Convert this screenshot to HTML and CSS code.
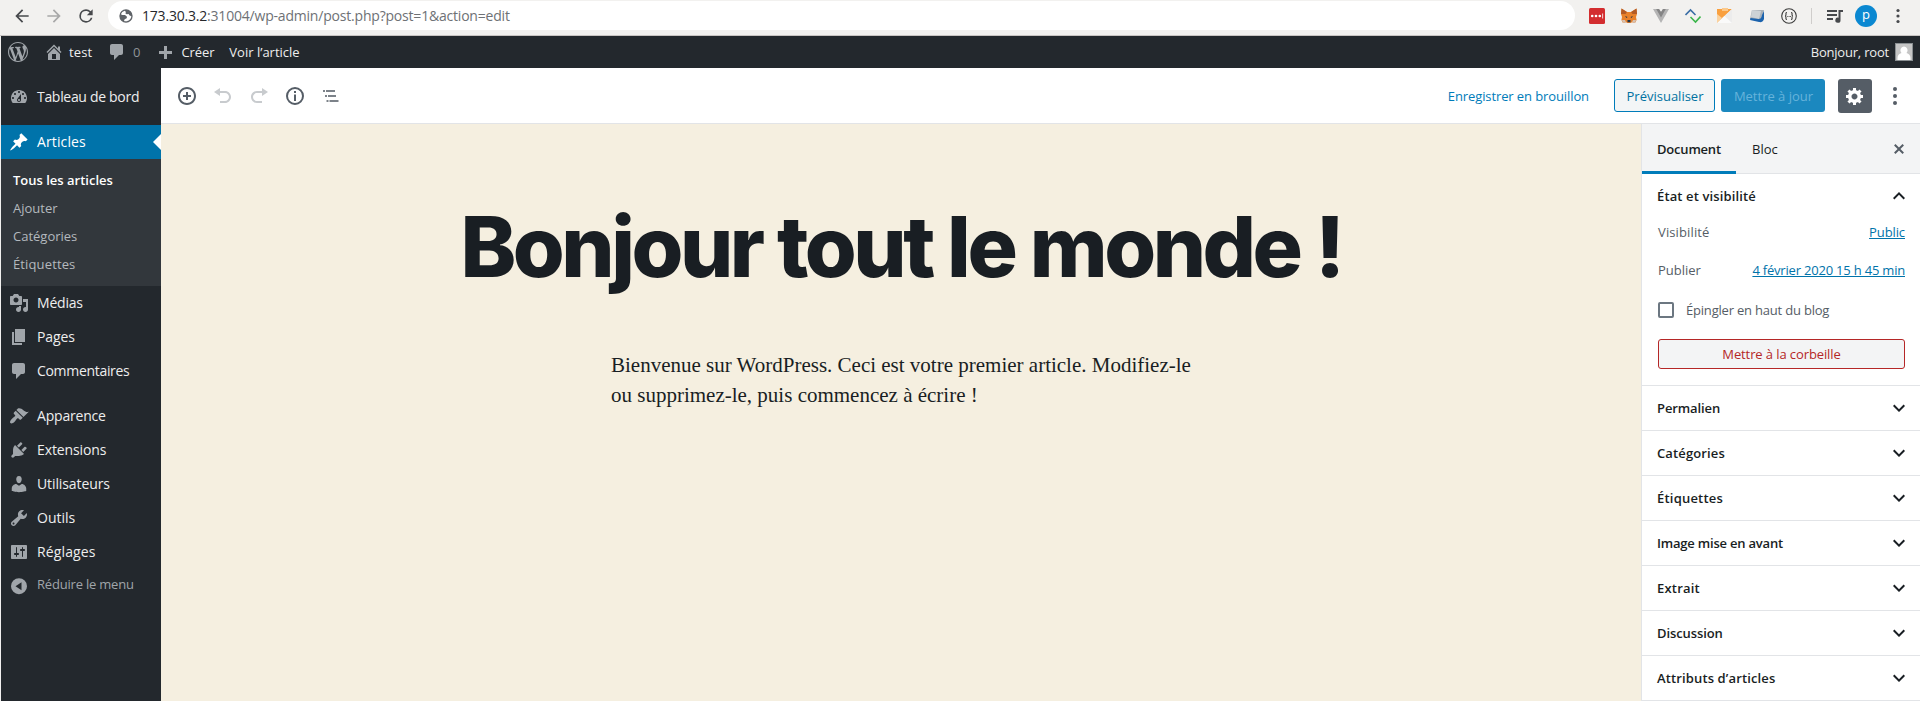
FILE: index.html
```html
<!DOCTYPE html>
<html lang="fr">
<head>
<meta charset="utf-8">
<title>Modifier l’article</title>
<link rel="stylesheet" href="styles.css">
</head>
<body>
<header class="browser">
  <svg class="nav-icon" viewBox="0 0 24 24"><path d="M20 11H7.83l5.59-5.59L12 4l-8 8 8 8 1.41-1.41L7.83 13H20z"/></svg>
  <svg class="nav-icon dim" viewBox="0 0 24 24"><path d="M4 11h12.17l-5.59-5.59L12 4l8 8-8 8-1.41-1.41L16.17 13H4z"/></svg>
  <svg class="nav-icon" viewBox="0 0 24 24"><path d="M17.65 6.35A7.96 7.96 0 0 0 12 4a8 8 0 1 0 7.73 10h-2.08A6 6 0 1 1 12 6c1.66 0 3.14.69 4.22 1.78L13 11h7V4z"/></svg>
  <div class="omnibox">
    <svg class="globe" viewBox="0 0 24 24"><path d="M12 2a10 10 0 1 0 0 20 10 10 0 0 0 0-20zm8 10.500c-.3 4.300-4 7.500-8 7.500-1 0-2-.2-3-.6l1-2.400 3-1.500.5-2.500-3-2.500H6.500L4.300 9.500A8 8 0 0 1 10 4.300L12 6l-1 2 2 1.500 3-.5 1 2z"/></svg>
    <span class="url"><b>173.30.3.2</b>:31004/wp-admin/post.php?post=1&amp;action=edit</span>
  </div>
  <div class="extensions">
    <svg viewBox="0 0 16 16"><rect width="16" height="16" rx="1.500" fill="#d32d2f"/><g fill="#fff"><circle cx="3.200" cy="8" r="1.300"/><circle cx="7" cy="8" r="1.300"/><circle cx="10.800" cy="8" r="1.300"/><path d="M13.300 5.500h.8v5h-.8z"/></g></svg>
    <svg viewBox="0 0 16 16"><path d="M.5.500 6 4h4L15.500.5 16 6l-1 3 .6 3-1.600 3-3-.8L9.500 15h-3L5 14.200 2 15 .4 12 1 9 0 6z" fill="#e8812a"/><path d="M.5.500 6 4 4.500 6 0 6zM15.500.5 10 4l1.500 2L16 6z" fill="#b35b25"/><path d="M5 14.200 2 15l-1-3h3zM11 14.200l3 .8 1-3h-3z" fill="#d6c0b0"/><path d="m4 8 2.500 1L5.500 10zM12 8 9.500 9l1 1zM6.500 12h3v2.200h-3z" fill="#233447"/></svg>
    <svg viewBox="0 0 16 16"><path d="M0 1h6l2 3 2-3h6L8 15z" fill="#b4b4b4"/><path d="M3.200 1H6l2 3 2-3h2.800L8 9.500z" fill="#858585"/></svg>
    <svg viewBox="0 0 16 16" fill="none" stroke-width="1.600"><path d="M.5 7 5.500 2l5 5" stroke="#3b6ea5"/><path d="m5.500 9 5 5 5-5.500" stroke="#3bb54a"/></svg>
    <svg viewBox="0 0 16 16"><path d="M0 1h15L0 15z" fill="#f9a03f"/><path d="M5 0h6v3H5z" fill="#fbc98b"/><path d="M15 1v14H0z" fill="#ececec"/><path d="m7.500 8 7.500 7H0z" fill="#fafafa"/><path d="M0 6v9l5-5z" fill="#fbd29e"/></svg>
    <svg viewBox="0 0 16 16"><path d="M3 2h12l-2 9H1z" fill="#a9b1b8"/><path d="m3 2 9 1-2 8-8-2z" fill="#ccd2d6"/><path d="M15 3v8c-1 3-3 3.500-5 3l-9-2 .5-2 8 1c2 0 3-1 3.500-4z" fill="#1c63ad"/></svg>
    <svg viewBox="0 0 16 16" fill="none" stroke="#3c3c3c"><circle cx="8" cy="8" r="7.300" stroke-width="1.100"/><path d="M6 4.500c-1.500 0-1 1-1 2S4.700 8 4 8c.7 0 1 .5 1 1.500s-.5 2 1 2M10 4.500c1.500 0 1 1 1 2s.3 1.500 1 1.500c-.7 0-1 .5-1 1.500s.5 2-1 2" stroke-width="1.100"/><path d="M6.300 8.500h3.800" stroke-dasharray=".9 .5" stroke-width=".9"/></svg>
    <i class="separator"></i>
    <svg class="queue" viewBox="0 0 18 16"><path d="M1 2h10v2H1zm0 4h10v2H1zm0 4h6v2H1zM12.500 2H17v2h-2.500v8.200a2.600 2.600 0 1 1-2-2.500z" fill="#47494c"/></svg>
    <span class="profile">p</span>
    <svg class="dots" viewBox="0 0 4 16"><circle cx="2" cy="2.500" r="1.600"/><circle cx="2" cy="8" r="1.600"/><circle cx="2" cy="13.500" r="1.600"/></svg>
  </div>
</header>

<div class="wp">
  <nav class="adminbar">
    <svg class="wp-logo" viewBox="0 0 20 20"><path d="M20 10c0-5.510-4.490-10-10-10C4.480 0 0 4.490 0 10c0 5.520 4.480 10 10 10 5.510 0 10-4.480 10-10zM7.780 15.370L4.370 6.220c.55-.02 1.170-.08 1.170-.08.5-.06.44-1.130-.06-1.110 0 0-1.450.11-2.370.11-.18 0-.37 0-.58-.01C4.120 2.690 6.870 1.110 10 1.110c2.330 0 4.450.87 6.050 2.340-.68-.11-1.650.39-1.650 1.580 0 .74.45 1.360.9 2.100.35.61.55 1.360.55 2.460 0 1.490-1.400 5-1.400 5l-3.030-8.370c.54-.02.82-.17.82-.17.5-.05.44-1.250-.06-1.220 0 0-1.440.12-2.380.12-.87 0-2.330-.12-2.330-.12-.5-.03-.56 1.200-.06 1.220l.92.08 1.260 3.410zM17.410 10c.24-.64.74-1.870.43-4.250.7 1.290 1.050 2.710 1.050 4.250 0 3.290-1.730 6.240-4.400 7.780.97-2.590 1.940-5.200 2.920-7.780zM6.100 18.090C3.120 16.650 1.110 13.530 1.110 10c0-1.300.23-2.480.72-3.590C3.250 10.300 4.670 14.200 6.100 18.090zm4.030-6.630l2.580 6.980c-.86.29-1.760.45-2.710.45-.79 0-1.570-.11-2.290-.33.81-2.380 1.620-4.740 2.420-7.100z"/></svg>
    <svg class="bar-home" viewBox="0 0 20 20"><path d="M16 8.500l1.530 1.530-1.060 1.060L10 4.600l-6.470 6.490-1.060-1.060L10 2.500l4 4v-2h2v4zm-6-2.460l6 5.990V18H4v-5.970zM12 17v-5H8v5h4z"/></svg>
    <span class="bar-site wide">test</span>
    <svg class="bar-comment" viewBox="0 0 20 20"><path d="M5 2h9c1.100 0 2 .9 2 2v7c0 1.100-.9 2-2 2h-2l-5 5v-5H5c-1.100 0-2-.9-2-2V4c0-1.100.9-2 2-2z"/></svg>
    <span class="bar-count">0</span>
    <svg class="bar-plus" viewBox="0 0 20 20"><path d="M17 7v3h-5v5H9v-5H4V7h5V2h3v5h5z"/></svg>
    <span class="bar-new tight">Créer</span>
    <span class="bar-view">Voir l’article</span>
    <span class="bar-user tighter">Bonjour, root</span>
    <svg class="avatar" viewBox="0 0 18 18"><path d="M0 0h18v18H0z" fill="#8a8f92"/><path d="M1 1h16v16H1z" fill="#c5c5c5"/><path d="M9 3.500a3.800 3.800 0 0 1 2.500 6.500c2.500.5 4 2.500 4 5v2h-13v-2c0-2.500 1.500-4.500 4-5A3.800 3.800 0 0 1 9 3.500z" fill="#fff"/></svg>
  </nav>

  <div class="body">
    <aside class="menu">
      <a class="item first"><svg viewBox="0 0 20 20"><path d="M3.760 16h12.480c1.100-1.370 1.760-3.110 1.760-5 0-4.420-3.580-8-8-8s-8 3.580-8 8c0 1.890.66 3.630 1.760 5zM10 4c.55 0 1 .45 1 1s-.45 1-1 1-1-.45-1-1 .45-1 1-1zM6 6c.55 0 1 .45 1 1s-.45 1-1 1-1-.45-1-1 .45-1 1-1zm8 0c.55 0 1 .45 1 1s-.45 1-1 1-1-.45-1-1 .45-1 1-1zm-5.370 5.550L12 7v6c0 1.100-.9 2-2 2s-2-.9-2-2c0-.57.24-1.080.63-1.450zM4 10c.55 0 1 .45 1 1s-.45 1-1 1-1-.45-1-1 .45-1 1-1zm12 0c.55 0 1 .45 1 1s-.45 1-1 1-1-.45-1-1 .45-1 1-1zm-5 3c0-.55-.45-1-1-1s-1 .45-1 1 .45 1 1 1 1-.45 1-1z"/></svg><span class="tightest">Tableau de bord</span></a>
      <a class="item current"><svg viewBox="0 0 20 20"><path d="M10.440 3.020l1.820-1.820 6.360 6.350-1.830 1.820c-1.050-.68-2.480-.57-3.410.36l-.75.75c-.92.93-1.040 2.350-.35 3.410l-1.830 1.820-2.410-2.410-2.800 2.790c-.42.42-3.380 2.710-3.800 2.290s1.860-3.390 2.280-3.810l2.790-2.790L4.100 9.360l1.830-1.820c1.050.69 2.480.57 3.400-.36l.75-.75c.93-.92 1.050-2.350.36-3.410z"/></svg><span class="wide">Articles</span></a>
      <div class="submenu">
        <a class="on">Tous les articles</a>
        <a>Ajouter</a>
        <a>Catégories</a>
        <a class="wide">Étiquettes</a>
      </div>
      <a class="item"><svg viewBox="0 0 20 20"><path d="M13 11V4c0-.55-.45-1-1-1h-1.670L9 1H5L3.670 3H2c-.55 0-1 .45-1 1v7c0 .55.45 1 1 1h10c.55 0 1-.45 1-1zM7 4.500c1.380 0 2.500 1.120 2.500 2.500S8.380 9.500 7 9.500 4.500 8.380 4.500 7 5.620 4.500 7 4.500zM14 6h5v10.500c0 1.380-1.120 2.500-2.500 2.500S14 17.880 14 16.500s1.120-2.500 2.500-2.500c.17 0 .34.02.5.05V9h-3V6zm-4 8.050V13h2v3.500c0 1.380-1.120 2.500-2.500 2.500S7 17.880 7 16.500 8.120 14 9.500 14c.17 0 .34.02.5.05z"/></svg><span class="tighter">Médias</span></a>
      <a class="item"><svg viewBox="0 0 20 20"><path d="M6 15V2h10v13H6zm-1 1h8v2H3V5h2v11z"/></svg><span class="tight">Pages</span></a>
      <a class="item"><svg viewBox="0 0 20 20"><path d="M5 2h9c1.100 0 2 .9 2 2v7c0 1.100-.9 2-2 2h-2l-5 5v-5H5c-1.100 0-2-.9-2-2V4c0-1.100.9-2 2-2z"/></svg><span class="tightest">Commentaires</span></a>
      <a class="item spaced"><svg viewBox="0 0 20 20"><path d="M14.480 11.060L7.410 3.990l1.500-1.500c.5-.56 2.300-.47 3.510.32 1.210.8 1.430 1.280 2.910 2.100 1.180.64 2.450 1.260 4.450.85zm-.71.71L6.700 4.700 4.930 6.470c-.39.39-.39 1.020 0 1.410l1.060 1.060c.39.39.39 1.030 0 1.420-.6.6-1.430 1.110-2.210 1.690-.35.26-.7.53-1.010.84C1.430 14.230.4 16.080 1.400 17.070c.99 1 2.840-.03 4.180-1.360.31-.31.58-.66.85-1.020.57-.78 1.080-1.610 1.690-2.210.39-.39 1.020-.39 1.410 0l1.060 1.060c.39.39 1.020.39 1.410 0z"/></svg><span class="tighter">Apparence</span></a>
      <a class="item"><svg viewBox="0 0 20 20"><path d="M13.110 4.360L9.870 7.600 8 5.730l3.240-3.240c.35-.34 1.050-.2 1.560.32.52.51.66 1.210.31 1.550zm-8 1.770l.91-1.120 9.010 9.010-1.190.84c-.71.71-2.630 1.160-3.820 1.160H6.140L4.900 17.260c-.59.59-1.540.59-2.120 0-.59-.58-.59-1.530 0-2.120l1.240-1.240v-3.880c0-1.130.4-3.190 1.090-3.890zm7.260 3.970l3.240-3.240c.34-.35 1.040-.21 1.550.31.52.51.66 1.210.31 1.550l-3.240 3.250z"/></svg><span class="tight">Extensions</span></a>
      <a class="item"><svg viewBox="0 0 20 20"><path d="M10 9.250c-2.270 0-2.730-3.440-2.730-3.440C7 4.020 7.820 2 9.970 2c2.160 0 2.980 2.020 2.710 3.810 0 0-.41 3.440-2.680 3.440zm0 2.570L12.720 10c2.390 0 4.520 2.330 4.520 4.530v2.490s-3.650 1.130-7.240 1.130c-3.650 0-7.240-1.130-7.240-1.130v-2.490c0-2.250 1.940-4.480 4.470-4.480z"/></svg><span class="tight">Utilisateurs</span></a>
      <a class="item"><svg viewBox="0 0 20 20"><path d="M16.680 9.770c-1.340 1.340-3.300 1.670-4.950.99l-5.410 6.520c-.99.99-2.590.99-3.580 0s-.99-2.590 0-3.570l6.520-5.420c-.68-1.650-.35-3.610.99-4.950 1.280-1.280 3.120-1.620 4.720-1.060l-2.890 2.890 2.820 2.820 2.860-2.870c.53 1.580.18 3.390-1.080 4.650zM3.810 16.210c.4.39 1.040.39 1.430 0 .4-.4.4-1.040 0-1.430-.39-.4-1.030-.4-1.430 0-.39.39-.39 1.030 0 1.430z"/></svg><span>Outils</span></a>
      <a class="item"><svg viewBox="0 0 20 20"><path d="M18 16V4c0-.55-.45-1-1-1H3c-.55 0-1 .45-1 1v12c0 .55.45 1 1 1h14c.55 0 1-.45 1-1zM8 11h1c.55 0 1 .45 1 1s-.45 1-1 1H8v1.500c0 .28-.22.5-.5.5s-.5-.22-.5-.5V13H6c-.55 0-1-.45-1-1s.45-1 1-1h1V5.500c0-.28.22-.5.5-.5s.5.220.5.5V11zm5-2h-1c-.55 0-1-.45-1-1s.45-1 1-1h1V5.500c0-.28.22-.5.5-.5s.5.220.5.500V7h1c.55 0 1 .45 1 1s-.45 1-1 1h-1v5.500c0 .28-.22.5-.5.5s-.5-.22-.5-.5V9z"/></svg><span class="wide">Réglages</span></a>
      <a class="item collapse"><svg viewBox="0 0 20 20"><path d="M10 2.200a8 8 0 1 0 0 16 8 8 0 0 0 0-16zm2.500 12L6.500 10.200l6-4z"/></svg><span class="tighter">Réduire le menu</span></a>
    </aside>

    <main class="editor">
      <div class="toolbar">
        <svg class="tool" viewBox="0 0 20 20"><path d="M10 1c-5 0-9 4-9 9s4 9 9 9 9-4 9-9-4-9-9-9zm0 16c-3.900 0-7-3.100-7-7s3.100-7 7-7 7 3.100 7 7-3.100 7-7 7zm1-11H9v3H6v2h3v3h2v-3h3V9h-3V6z"/></svg>
        <svg class="tool off" viewBox="0 0 20 20"><path d="M12 5H7V2L1 6l6 4V7h5c2.200 0 4 1.800 4 4s-1.800 4-4 4H7v2h5c3.300 0 6-2.700 6-6s-2.700-6-6-6z"/></svg>
        <svg class="tool off" viewBox="0 0 20 20"><path d="M8 5h5V2l6 4-6 4V7H8c-2.200 0-4 1.800-4 4s1.800 4 4 4h5v2H8c-3.300 0-6-2.700-6-6s2.700-6 6-6z"/></svg>
        <svg class="tool" viewBox="0 0 20 20"><path d="M10 1a9 9 0 1 0 0 18 9 9 0 0 0 0-18zm0 16a7 7 0 1 1 0-14 7 7 0 0 1 0 14zM9 5h2v2H9zm0 3.500h2V15H9z"/></svg>
        <svg class="tool soft" viewBox="0 0 20 20"><path d="M2 4h2v2H2zm3 0h9v2H5zM4 9h2v2H4zm3 0h8v2H7zM5.500 14h2v2h-2zm3 0h9v2h-9z"/></svg>
        <a class="draft tight">Enregistrer en brouillon</a>
        <button class="preview">Prévisualiser</button>
        <button class="update">Mettre à jour</button>
        <button class="gear"><svg viewBox="0 0 20 20"><path d="M18 12h-2.180c-.17.7-.44 1.350-.81 1.930l1.540 1.540-2.100 2.100-1.540-1.540c-.58.36-1.230.63-1.910.79V19H8v-2.180c-.68-.16-1.330-.43-1.910-.79l-1.540 1.540-2.120-2.120 1.540-1.540c-.36-.58-.63-1.230-.79-1.910H1V9.030h2.170c.16-.7.44-1.350.8-1.940L2.430 5.550l2.100-2.100 1.540 1.540c.58-.37 1.240-.64 1.930-.81V2h3v2.180c.68.16 1.330.43 1.910.79l1.540-1.540 2.120 2.120-1.540 1.540c.36.59.64 1.240.8 1.940H18V12zm-8.500 1.500c1.660 0 3-1.340 3-3s-1.340-3-3-3-3 1.340-3 3 1.340 3 3 3z"/></svg></button>
        <svg class="more" viewBox="0 0 4 20"><circle cx="2" cy="3" r="2"/><circle cx="2" cy="10" r="2"/><circle cx="2" cy="17" r="2"/></svg>
      </div>

      <div class="workspace">
        <article class="canvas">
          <h1>Bonjour tout le monde !</h1>
          <p>Bienvenue sur WordPress. Ceci est votre premier article. Modifiez-le ou supprimez-le, puis commencez à écrire !</p>
        </article>

        <aside class="settings">
          <div class="tabs">
            <span class="tab active tighter">Document</span>
            <span class="tab">Bloc</span>
            <svg class="close" viewBox="0 0 20 20"><path d="M14.950 6.460L11.410 10l3.540 3.540-1.410 1.410L10 11.420l-3.530 3.530-1.420-1.420L8.580 10 5.050 6.470l1.420-1.420L10 8.580l3.540-3.530z"/></svg>
          </div>
          <section class="status">
            <h2><span class="wide">État et visibilité</span><svg class="chevron" viewBox="0 0 24 24"><path d="M12 8l-6 6 1.410 1.410L12 10.830l4.590 4.580L18 14z"/></svg></h2>
            <div class="row visibility"><span class="wide">Visibilité</span><a class="tight">Public</a></div>
            <div class="row publish"><span>Publier</span><a class="tighter">4 février 2020 15 h 45 min</a></div>
            <label class="sticky"><i class="checkbox"></i><span class="tighter">Épingler en haut du blog</span></label>
            <button class="trash tight">Mettre à la corbeille</button>
          </section>
          <h2 class="panel"><span class="tight">Permalien</span><svg class="chevron" viewBox="0 0 24 24"><path d="M7.410 8.590L12 13.170l4.590-4.580L18 10l-6 6-6-6z"/></svg></h2>
          <h2 class="panel"><span class="wide">Catégories</span><svg class="chevron" viewBox="0 0 24 24"><path d="M7.410 8.590L12 13.170l4.590-4.580L18 10l-6 6-6-6z"/></svg></h2>
          <h2 class="panel"><span class="wider">Étiquettes</span><svg class="chevron" viewBox="0 0 24 24"><path d="M7.410 8.590L12 13.170l4.590-4.580L18 10l-6 6-6-6z"/></svg></h2>
          <h2 class="panel"><span class="tighter">Image mise en avant</span><svg class="chevron" viewBox="0 0 24 24"><path d="M7.410 8.590L12 13.170l4.590-4.580L18 10l-6 6-6-6z"/></svg></h2>
          <h2 class="panel"><span class="wider">Extrait</span><svg class="chevron" viewBox="0 0 24 24"><path d="M7.410 8.590L12 13.170l4.590-4.580L18 10l-6 6-6-6z"/></svg></h2>
          <h2 class="panel"><span class="tight">Discussion</span><svg class="chevron" viewBox="0 0 24 24"><path d="M7.410 8.590L12 13.170l4.590-4.580L18 10l-6 6-6-6z"/></svg></h2>
          <h2 class="panel"><span class="wide">Attributs d’articles</span><svg class="chevron" viewBox="0 0 24 24"><path d="M7.410 8.590L12 13.170l4.590-4.580L18 10l-6 6-6-6z"/></svg></h2>
        </aside>
      </div>
    </main>
  </div>
</div>
</body>
</html>
```
FILE: styles.css
```css
* { box-sizing: border-box; }
body {
  margin: 0;
  width: 1920px;
  height: 701px;
  overflow: hidden;
  background: #f1f0ef;
  font: 13px/20px "Open Sans", "Noto Sans", sans-serif;
  color: #191e23;
}
svg { display: block; flex: none; }
span, a { white-space: nowrap; }
button { font: inherit; padding: 0; margin: 0; }

/* letter spacing steps */
.tightest { letter-spacing: -.31px; }
.tighter { letter-spacing: -.2px; }
.tight { letter-spacing: -.1px; }
.wide { letter-spacing: .13px; }
.wider { letter-spacing: .21px; }

/* browser chrome */
.browser {
  height: 36px;
  display: flex;
  align-items: center;
  padding: 0 0 4px 12px;
  background: #f2f1ef;
  border-bottom: 1px solid #c9c5c3;
}
.nav-icon { width: 20px; height: 20px; margin-right: 12px; fill: #47494c; }
.nav-icon.dim { fill: #a8a8a8; }
.omnibox {
  width: 1467px;
  height: 29px;
  padding-left: 10px;
  display: flex;
  align-items: center;
  background: #fff;
  border-radius: 15px;
}
.globe { width: 16px; height: 16px; fill: #5f6368; }
.url { margin-left: 8px; font-size: 14px; letter-spacing: -.2px; color: #6e7175; }
.url b { font-weight: 400; color: #26282b; }
.extensions { display: flex; align-items: center; margin-left: 14px; }
.extensions > svg { width: 16px; height: 16px; margin-right: 16px; }
.separator { width: 1px; height: 16px; margin: 0 14px 0 -2px; background: #cfcdcb; }
.extensions > .queue { width: 18px; margin-right: 11px; }
.profile {
  width: 22px;
  height: 22px;
  border-radius: 50%;
  background: #0b88d1;
  color: #fff;
  font-size: 13px;
  line-height: 19px;
  text-align: center;
}
.extensions > .dots { width: 4px; margin: 0 0 0 19px; fill: #47494c; }

/* admin bar */
.wp { margin-left: 1px; height: 665px; display: flex; flex-direction: column; }
.adminbar {
  height: 32px;
  flex: none;
  display: flex;
  align-items: center;
  padding-left: 7px;
  background: #23282d;
  color: #eee;
}
.adminbar svg { width: 20px; height: 20px; fill: #a0a5aa; }
.bar-home { margin-left: 16px; }
.bar-site { margin-left: 5px; width: 35px; }
.bar-comment { margin-left: 3px; }
.bar-count { margin: 0 15px 0 6px; color: #8f9498; }
.bar-plus { margin-top: 3px; }
.bar-new { margin-left: 6px; }
.bar-view { margin-left: 15px; }
.bar-user { margin-left: auto; }
.adminbar .avatar { width: 18px; height: 18px; margin: 0 7px 0 6px; }

/* side menu */
.body { flex: 1; display: flex; min-height: 0; }
.menu { width: 160px; flex: none; background: #23282d; }
.item {
  height: 34px;
  display: flex;
  align-items: center;
  padding-left: 8px;
  font-size: 14px;
  color: #eee;
}
.item svg { width: 20px; height: 20px; margin-right: 8px; fill: #a0a5aa; }
.item.first { margin: 12px 0 11px; }
.item.current { position: relative; background: #0073aa; color: #fff; }
.item.current svg { fill: #fff; }
.item.current::after {
  content: "";
  position: absolute;
  right: 0;
  top: 9px;
  border: 8px solid transparent;
  border-left: 0;
  border-right-color: #fff;
}
.submenu { height: 127px; padding: 7px 0 0 12px; background: #32373c; }
.submenu a { display: block; height: 28px; line-height: 28px; color: #b4b9be; }
.submenu .on { font-weight: 600; color: #fff; }
.item.spaced { margin-top: 11px; }
.item.collapse { height: 30px; font-size: 13px; color: #a0a5aa; }
.item.collapse svg { margin-top: 4px; }

/* editor toolbar */
.editor { flex: 1; min-width: 0; display: flex; flex-direction: column; }
.toolbar {
  height: 56px;
  flex: none;
  display: flex;
  align-items: center;
  padding-left: 16px;
  background: #fff;
  border-bottom: 1px solid #e2e4e7;
}
.tool { width: 20px; height: 20px; margin-right: 16px; fill: #555d66; }
.tool.off { fill: #c8cbce; }
.tool.soft { fill: #7c8289; }
.draft { margin-left: auto; color: #007cba; }
.preview, .update { height: 33px; border-radius: 3px; }
.preview {
  width: 101px;
  margin-left: 25px;
  padding-left: 1px;
  border: 1px solid #007cba;
  background: #f3f5f6;
  color: #0071a1;
}
.update { width: 104px; margin-left: 6px; padding-left: 1px; border: 0; background: #1b88bf; color: #66b3db; }
.gear {
  width: 34px;
  height: 34px;
  margin-left: 13px;
  border: 0;
  border-radius: 3px;
  background: #555d66;
  display: grid;
  place-items: center;
}
.gear svg { width: 20px; height: 20px; fill: #fff; }
.more { width: 4px; height: 20px; margin: 0 23px 0 21px; fill: #555d66; }

/* post canvas */
.workspace { flex: 1; display: flex; min-height: 0; }
.canvas { flex: 1; padding-top: 75px; background: #f5efe0; }
.canvas h1 {
  margin: 0;
  font: 800 84px/96px Inter, sans-serif;
  letter-spacing: -3.49px;
  word-spacing: .5px;
  text-align: center;
  white-space: nowrap;
}
.canvas p {
  width: 582px;
  margin: 55px auto 0;
  padding-left: 1px;
  font: 21px/30px "Liberation Serif", serif;
}

/* document settings */
.settings { width: 279px; flex: none; background: #fff; border-left: 1px solid #e2e4e7; }
.tabs {
  height: 50px;
  display: flex;
  background: #f3f4f5;
  border-bottom: 1px solid #e2e4e7;
}
.tab { height: 50px; line-height: 50px; padding: 0 15px; }
.tab.active { width: 94px; font-weight: 600; border-bottom: 3px solid #007cba; }
.tab + .tab { padding-left: 16px; }
.close { width: 20px; height: 20px; margin: 15px 11px 0 auto; fill: #555d66; }
.settings h2 {
  margin: 0;
  height: 44px;
  padding: 0 9px 0 15px;
  display: flex;
  align-items: center;
  justify-content: space-between;
  font-size: 13px;
  font-weight: 600;
}
.chevron { width: 24px; height: 24px; fill: #191e23; }
.status { height: 212px; border-bottom: 1px solid #e2e4e7; color: #555d66; }
.status h2 { color: #191e23; }
.row { display: flex; justify-content: space-between; padding: 0 15px 0 16px; }
.row a { color: #0073aa; text-decoration: underline; }
.visibility { margin-top: 4px; }
.publish { margin-top: 18px; }
.sticky { display: flex; align-items: center; margin: 20px 0 0 16px; }
.checkbox { width: 16px; height: 16px; margin-right: 12px; border: 2px solid #6c7781; border-radius: 2px; }
.trash {
  display: block;
  width: 247px;
  height: 30px;
  margin: 19px 0 0 16px;
  border: 1px solid #b52727;
  border-radius: 3px;
  background: #f3f4f5;
  color: #b52727;
}
.settings .panel { height: 45px; border-bottom: 1px solid #e2e4e7; }
```
